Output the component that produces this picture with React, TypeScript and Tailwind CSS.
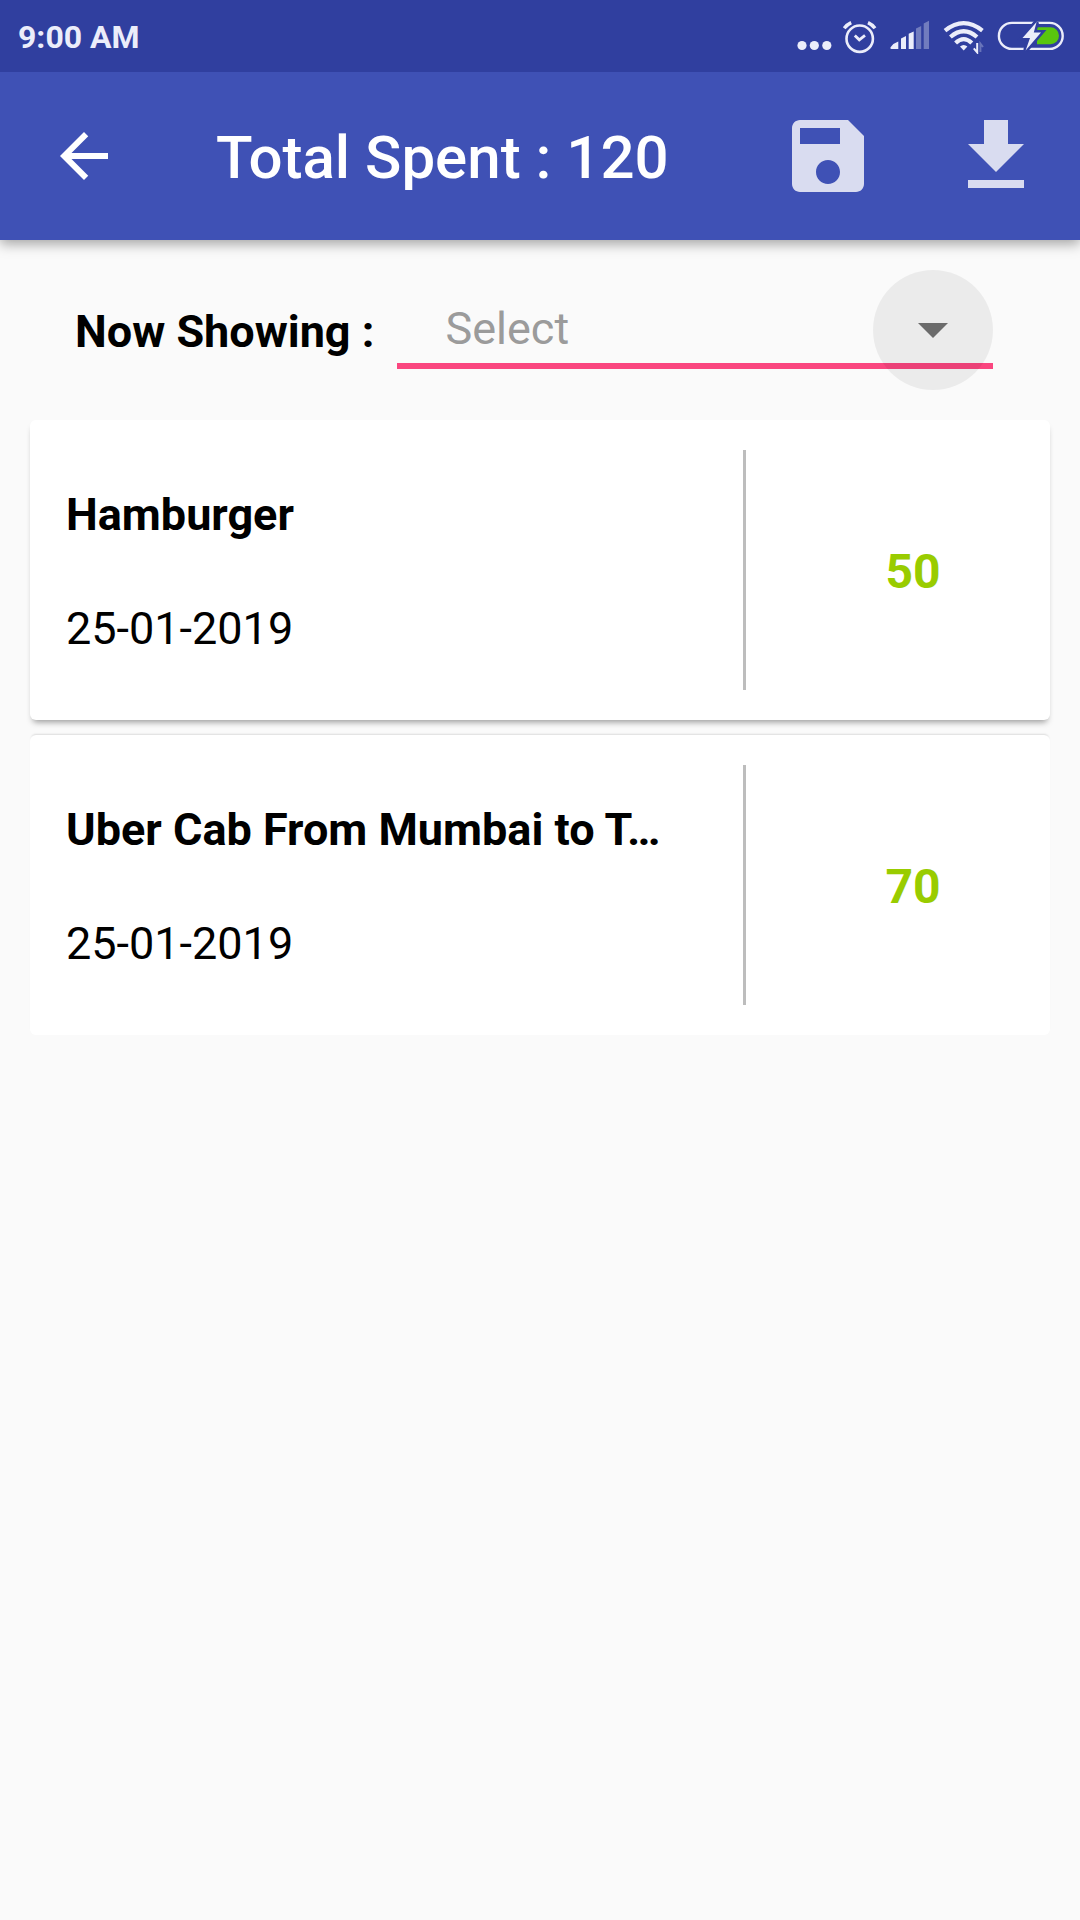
import { useState } from 'react';

interface Expense {
  id: number;
  title: string;
  date: string;
  amount: number;
}

const EXPENSES: Expense[] = [
  { id: 1, title: 'Hamburger', date: '25-01-2019', amount: 50 },
  { id: 2, title: 'Uber Cab From Mumbai to T…', date: '25-01-2019', amount: 70 },
];

function StatusBar() {
  return (
    <div className="relative z-10 flex h-[72px] items-center justify-between bg-[#303f9f] pr-[14px] pl-[18px] text-[#ebedfa]">
      <span className="pt-[2px] text-[32px] leading-9 font-bold">9:00 AM</span>
      <div className="flex items-center gap-[10px]">
        {/* more notifications */}
        <svg width="36" height="36" viewBox="0 0 36 36" fill="currentColor" aria-hidden="true">
          <circle cx="6" cy="27.5" r="4.6" />
          <circle cx="18.3" cy="27.5" r="4.6" />
          <circle cx="30.8" cy="27.5" r="4.6" />
        </svg>
        {/* alarm */}
        <svg width="36" height="36" viewBox="0 0 36 36" fill="none" stroke="currentColor" aria-hidden="true">
          <circle cx="17.7" cy="20.7" r="13.2" strokeWidth="2.6" />
          <path d="M2.2 10.3Q5 6.5 9.2 4.6M26 4.6Q30.2 6.5 33 10.3" strokeWidth="3.4" />
          <path d="M12.8 17.4L17.3 21.8L23 17.4" strokeWidth="2.8" />
        </svg>
        {/* signal */}
        <svg width="42" height="36" viewBox="0 0 42 36" fill="currentColor" aria-hidden="true">
          <path d="M3.5 31Q1.5 30.5 3 28.8Q6 25 10.3 23.6V31ZM13 31V20.4L18 18V31ZM20.7 31V15.8L25.7 13.4V31Z" />
          <path d="M28 31V10.6L33.2 8V31ZM35.7 31V5.4L41 2.8V31Z" opacity=".35" />
        </svg>
        {/* wifi */}
        <svg width="46" height="36" viewBox="0 0 46 36" fill="none" stroke="currentColor" aria-hidden="true">
          <path d="M5 12.6Q23.7 -2.4 42.4 12.6" strokeWidth="4.2" />
          <path d="M10.4 19Q23.7 7.6 37 19" strokeWidth="4.2" />
          <path d="M15.6 25Q23.7 17.2 31.8 25" strokeWidth="4.2" />
          <path d="M20 28.6Q23.7 25.4 27.4 28.6L23.7 32.6Z" fill="currentColor" stroke="none" />
          <path d="M37.2 25V34.4L33.8 30.4" strokeWidth="2" />
          <path d="M40.4 34V25.6L43 29" strokeWidth="2" opacity=".3" />
        </svg>
        {/* battery */}
        <svg width="70" height="36" viewBox="0 0 70 36" fill="none" aria-hidden="true">
          <rect x="2.9" y="4.9" width="63.8" height="26" rx="13" stroke="currentColor" strokeWidth="2.4" />
          <path d="M41 9.3H54.5A8.5 8.5 0 0 1 54.5 26.3H41Z" fill="#59c60f" />
          <path
            d="M40.6 4L26.5 19.9H34L29.6 32.4L45 14.4H37.8Z"
            fill="currentColor"
            stroke="#303f9f"
            strokeWidth="5"
            paintOrder="stroke"
          />
        </svg>
      </div>
    </div>
  );
}

function AppBar({ total }: { total: number }) {
  return (
    <header className="relative flex h-[168px] items-center bg-[#3f51b5] pr-9 pl-12 shadow-[0_4px_12px_rgba(0,0,0,0.35)]">
      <button type="button" aria-label="Back" className="text-white">
        <svg width="72" height="72" viewBox="0 0 24 24" fill="currentColor">
          <path d="M20 11H7.83l5.59-5.59L12 4l-8 8 8 8 1.41-1.41L7.83 13H20v-2z" />
        </svg>
      </button>
      <h1 className="ml-24 flex-1 pt-1 text-[60px] leading-[72px] font-medium text-white">
        Total Spent : {total}
      </h1>
      <div className="flex gap-[72px] text-[#d9dcf0]">
        <button type="button" aria-label="Save">
          <svg width="96" height="96" viewBox="0 0 24 24" fill="currentColor">
            <path d="M17 3H5c-1.11 0-2 .9-2 2v14c0 1.1.89 2 2 2h14c1.1 0 2-.9 2-2V7l-4-4zm-5 16c-1.66 0-3-1.34-3-3s1.34-3 3-3 3 1.34 3 3-1.34 3-3 3zm3-10H5V5h10v4z" />
          </svg>
        </button>
        <button type="button" aria-label="Download">
          <svg width="96" height="96" viewBox="0 0 24 24" fill="currentColor">
            <path d="M19 9h-4V3H9v6H5l7 7 7-7zM5 18v2h14v-2H5z" />
          </svg>
        </button>
      </div>
    </header>
  );
}

function FilterRow() {
  const [filter, setFilter] = useState('');

  return (
    <div className="flex items-center pt-[30px] pr-[87px] pl-[75px]">
      <label htmlFor="filter" className="pt-1 text-[45px] leading-[54px] font-bold">
        Now Showing :
      </label>
      <div className="relative ml-[23px] flex h-[120px] flex-1 items-center">
        <select
          id="filter"
          value={filter}
          onChange={(e) => setFilter(e.target.value)}
          className="h-[78px] w-full appearance-none border-b-6 border-[#fa467f] bg-transparent pt-1 pl-12 text-[45px] leading-[54px] text-[#9b9b9b] outline-none"
        >
          <option value="">Select</option>
          <option value="today">Today</option>
          <option value="month">This Month</option>
        </select>
        <span className="pointer-events-none absolute right-0 flex size-[120px] items-center justify-center rounded-full bg-black/6">
          <svg width="30" height="15" viewBox="0 0 30 15" fill="#6b6b6b" aria-hidden="true">
            <path d="M0 0H30L15 15Z" />
          </svg>
        </span>
      </div>
    </div>
  );
}

function ExpenseCard({ expense }: { expense: Expense }) {
  return (
    <li className="flex h-[300px] rounded-md bg-white py-[30px] shadow-[0_5px_6px_-3px_rgba(0,0,0,0.4)] last:shadow-[0_-2px_2px_-1px_rgba(0,0,0,0.12)]">
      <div className="flex min-w-0 flex-1 flex-col justify-center gap-[60px] pt-1 pl-9 text-[45px] leading-[54px]">
        <h2 className="truncate font-bold">{expense.title}</h2>
        <p>{expense.date}</p>
      </div>
      <div className="w-[3px] bg-[#bdbdbd]" />
      <div className="ml-[30px] flex w-[274px] items-center justify-center pt-1 text-[48px] leading-[60px] font-bold text-[#99cc00]">
        {expense.amount}
      </div>
    </li>
  );
}

export default function App() {
  const total = EXPENSES.reduce((sum, e) => sum + e.amount, 0);

  return (
    <div className="min-h-screen bg-[#fafafa] font-['Roboto',sans-serif] text-black">
      <StatusBar />
      <AppBar total={total} />
      <main>
        <FilterRow />
        <ul className="mt-[30px] flex flex-col gap-[15px] px-[30px]">
          {EXPENSES.map((expense) => (
            <ExpenseCard key={expense.id} expense={expense} />
          ))}
        </ul>
      </main>
    </div>
  );
}
